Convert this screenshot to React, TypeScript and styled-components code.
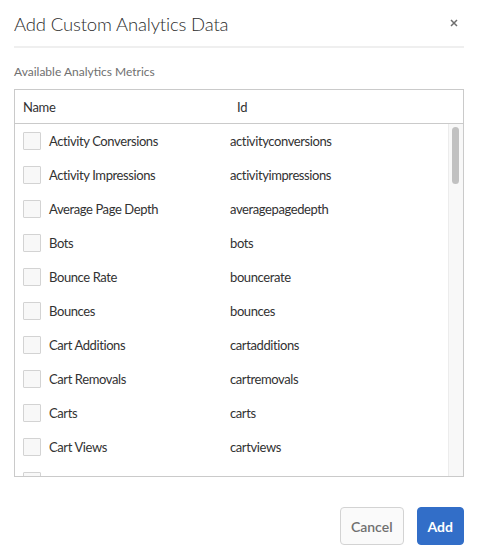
import * as React from 'react';
import styled, { createGlobalStyle } from 'styled-components';

const GlobalStyle = createGlobalStyle`
  html, body {
    margin: 0;
    padding: 0;
    background: #ffffff;
  }
  body {
    font-family: Lato, "Open Sans", sans-serif;
    color: #323232;
  }
`;

const metrics: Array<[string, string]> = [
  ['Activity Conversions', 'activityconversions'],
  ['Activity Impressions', 'activityimpressions'],
  ['Average Page Depth', 'averagepagedepth'],
  ['Bots', 'bots'],
  ['Bounce Rate', 'bouncerate'],
  ['Bounces', 'bounces'],
  ['Cart Additions', 'cartadditions'],
  ['Cart Removals', 'cartremovals'],
  ['Carts', 'carts'],
  ['Cart Views', 'cartviews'],
  ['Checkouts', 'checkouts'],
  ['Custom Link', 'customlink'],
];

const Dialog = styled.div`
  width: 478px;
  height: 559px;
  box-sizing: border-box;
  padding: 0 14px;
  display: flex;
  flex-direction: column;
`;

const Header = styled.div`
  height: 46px;
  display: flex;
  align-items: center;
  justify-content: space-between;
  border-bottom: 2px solid #efefef;
`;

const Title = styled.h1`
  margin: 0;
  font-size: 18.5px;
  font-weight: 300;
  letter-spacing: -0.15px;
  color: #2c2c2c;
  padding-top: 2px;
`;

const Close = styled.button`
  border: none;
  background: none;
  padding: 0;
  margin-right: 6px;
  width: 8px;
  height: 8px;
  display: flex;
  cursor: pointer;
`;

const Label = styled.div`
  margin-top: 17px;
  font-size: 12px;
  color: #707070;
  line-height: 14px;
`;

const Table = styled.div`
  margin-top: 10px;
  border: 1px solid #cacaca;
  height: 388px;
  box-sizing: border-box;
  display: flex;
  flex-direction: column;
`;

const HeadRow = styled.div`
  height: 33px;
  flex-shrink: 0;
  display: flex;
  align-items: center;
  border-bottom: 1px solid #cacaca;
  font-size: 13px;
  letter-spacing: -0.3px;
  color: #323232;
`;

const HeadCell = styled.div<{ $width?: number }>`
  padding-left: 8px;
  width: ${(p) => (p.$width ? `${p.$width}px` : 'auto')};
  box-sizing: border-box;
`;

const Body = styled.div`
  flex: 1;
  display: flex;
  overflow: hidden;
`;

const Rows = styled.div`
  flex: 1;
  overflow: hidden;
`;

const Row = styled.div`
  height: 34px;
  display: flex;
  align-items: center;
  font-size: 13px;
  letter-spacing: -0.4px;
  color: #323232;
  padding-bottom: 1px;
  box-sizing: border-box;
`;

const Check = styled.span`
  width: 18px;
  height: 18px;
  box-sizing: border-box;
  border: 1px solid #d3d3d3;
  background: #f8f8f8;
  border-radius: 1px;
  margin-left: 8px;
  margin-right: 8px;
  flex-shrink: 0;
`;

const NameCell = styled.span`
  width: 181px;
`;

const Track = styled.div`
  width: 15px;
  flex-shrink: 0;
  background: #f8f8f8;
  border-left: 1px solid #ececec;
  box-sizing: border-box;
  padding: 3px 0 0 3px;
`;

const Thumb = styled.div`
  width: 7px;
  height: 57px;
  border-radius: 4px;
  background: #c1c1c1;
`;

const Footer = styled.div`
  margin-top: 30px;
  display: flex;
  justify-content: flex-end;
  gap: 13px;
`;

const Button = styled.button<{ $primary?: boolean }>`
  height: 38px;
  box-sizing: border-box;
  padding: 0 10px;
  border-radius: 4px;
  font-family: Lato, "Open Sans", sans-serif;
  font-size: 14px;
  font-weight: ${(p) => (p.$primary ? 700 : 600)};
  border: 1px solid ${(p) => (p.$primary ? '#326ec8' : '#d3d3d3')};
  background: ${(p) => (p.$primary ? '#326ec8' : '#fafafa')};
  color: ${(p) => (p.$primary ? '#ffffff' : '#707070')};
  cursor: pointer;
`;

export default function App() {
  return (
    <>
      <GlobalStyle />
      <Dialog>
        <Header>
          <Title>Add Custom Analytics Data</Title>
          <Close aria-label="Close">
            <svg width="8" height="8" viewBox="0 0 8 8">
              <path d="M1 1L7 7M7 1L1 7" stroke="#6e6e6e" strokeWidth="1.5" />
            </svg>
          </Close>
        </Header>
        <Label>Available Analytics Metrics</Label>
        <Table>
          <HeadRow>
            <HeadCell $width={214}>Name</HeadCell>
            <HeadCell>Id</HeadCell>
          </HeadRow>
          <Body>
            <Rows>
              {metrics.map(([name, id]) => (
                <Row key={id}>
                  <Check />
                  <NameCell>{name}</NameCell>
                  <span>{id}</span>
                </Row>
              ))}
            </Rows>
            <Track>
              <Thumb />
            </Track>
          </Body>
        </Table>
        <Footer>
          <Button>Cancel</Button>
          <Button $primary>Add</Button>
        </Footer>
      </Dialog>
    </>
  );
}
